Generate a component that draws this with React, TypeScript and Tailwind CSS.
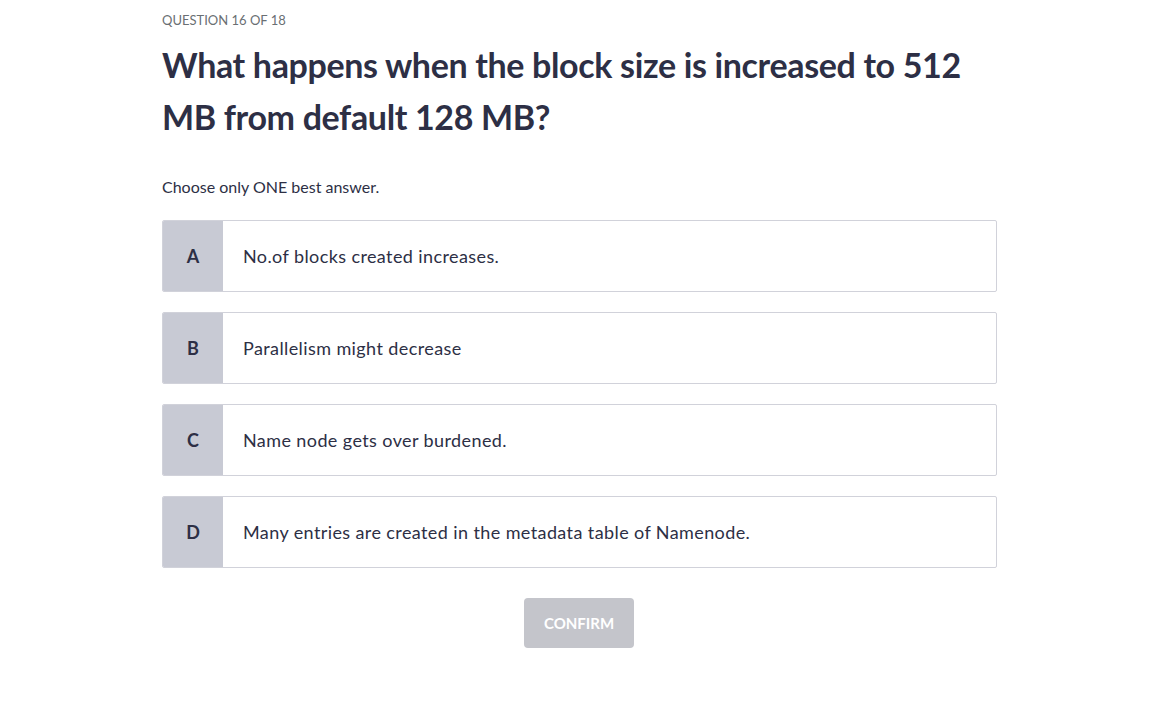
import React from "react";

const options = [
  { k: "A", t: "No.of blocks created increases." },
  { k: "B", t: "Parallelism might decrease" },
  { k: "C", t: "Name node gets over burdened." },
  { k: "D", t: "Many entries are created in the metadata table of Namenode." },
];

export default function App() {
  return (
    <div className="min-h-[713px] bg-white" style={{ fontFamily: "Lato, 'Noto Sans', sans-serif" }}>
      <div className="ml-[162px] w-[835px] pt-[11px]">
        <div className="text-[13px] leading-[18px] text-[#6a6f73]">QUESTION 16 OF 18</div>
        <h1 className="mt-[10px] text-[34px] leading-[52px] font-bold text-[#2d2f45] tracking-[-0.35px] pr-[20px]">
          What happens when the block size is increased to 512 MB from default 128 MB?
        </h1>
        <div className="mt-[34px] text-[16px] leading-[20px] text-[#2d2f45]">Choose only ONE best answer.</div>
        <div className="mt-[23px] flex flex-col gap-[20px]">
          {options.map((o) => (
            <div key={o.k} className="flex h-[72px] rounded-[2px] border border-[#d1d2da] overflow-hidden">
              <div className="w-[60px] bg-[#c8cad4] flex items-center justify-center text-[18px] font-bold text-[#2d2f45]">
                {o.k}
              </div>
              <div className="flex-1 flex items-center pl-[20px] text-[18px] tracking-[0.4px] text-[#2d2f45]">{o.t}</div>
            </div>
          ))}
        </div>
        <div className="mt-[30px] flex justify-center pr-[1px]">
          <button className="w-[110px] h-[50px] rounded-[4px] bg-[#c4c5cb] text-white text-[15px] font-bold">
            CONFIRM
          </button>
        </div>
      </div>
    </div>
  );
}
